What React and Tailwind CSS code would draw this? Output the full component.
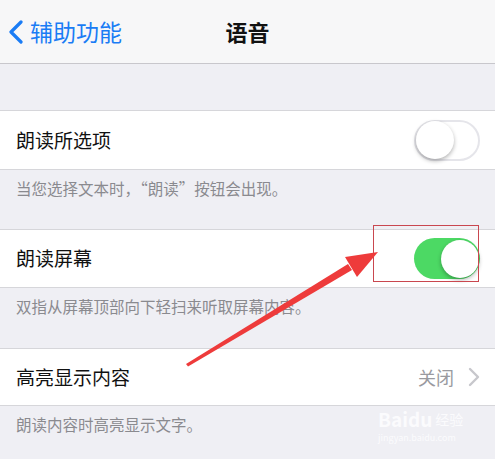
import React from 'react';

const font = { fontFamily: '"Noto Sans CJK SC", "Noto Sans", sans-serif' };

const Toggle = ({ on }) => (
  <div
    className={`relative w-[66px] h-[41px] rounded-full ${
      on ? 'bg-[#4cd964]' : 'bg-white border-2 border-[#e5e5ea]'
    }`}
  >
    <div
      className={`absolute w-[38px] h-[38px] rounded-full bg-white shadow-[0_2px_4px_rgba(0,0,0,0.3)] ${
        on ? 'right-[1px] top-[1.5px]' : 'left-0 top-[-0.5px]'
      }`}
    />
  </div>
);

const Row = ({ label, right, height }) => (
  <div
    className={`flex items-center justify-between bg-white border-y border-[#d6d6da] pl-[16px] pr-[15px] ${height}`}
  >
    <span className="text-[19px] text-[#111]">{label}</span>
    {right}
  </div>
);

const Footer = ({ text, height }) => (
  <div className={`px-[16px] pt-[7px] ${height}`}>
    <p className="text-[15.5px] text-[#8a8a8f]">{text}</p>
  </div>
);

export default function App() {
  return (
    <div className="relative w-[495px] h-[459px] overflow-hidden bg-[#efeff4]" style={font}>
      <div className="relative flex items-center h-[64px] bg-[#f7f7f8] border-b border-[#c8c7cc]">
        <div className="flex items-center pl-[7px] text-[#1a7cf5]">
          <svg width="18" height="24" viewBox="0 0 18 24">
            <path d="M14 2 L4 12 L14 22" fill="none" stroke="#1a7cf5" strokeWidth="3.2" strokeLinecap="round" strokeLinejoin="round" />
          </svg>
          <span className="ml-[5px] text-[23px]">辅助功能</span>
        </div>
        <span className="absolute left-1/2 -translate-x-1/2 text-[22px] font-bold text-[#111]">语音</span>
      </div>

      <div className="h-[46px]" />

      <Row label="朗读所选项" height="h-[60px]" right={<Toggle on={false} />} />
      <Footer text="当您选择文本时，“朗读”按钮会出现。" height="h-[59px]" />

      <Row label="朗读屏幕" height="h-[59px]" right={<Toggle on />} />
      <Footer text="双指从屏幕顶部向下轻扫来听取屏幕内容。" height="h-[60px]" />

      <Row
        label="高亮显示内容"
        height="h-[58px]"
        right={
          <div className="flex items-center gap-[14px]">
            <span className="text-[18px] text-[#9a9a9f]">关闭</span>
            <svg width="12" height="20" viewBox="0 0 12 20">
              <path d="M2 2 L10 10 L2 18" fill="none" stroke="#c7c7cc" strokeWidth="2.4" strokeLinecap="round" strokeLinejoin="round" />
            </svg>
          </div>
        }
      />
      <Footer text="朗读内容时高亮显示文字。" height="h-[53px]" />

      {/* highlight box */}
      <div className="absolute left-[373px] top-[225px] w-[106px] h-[57px] border border-[#c9474f]" />

      {/* arrow */}
      <svg className="absolute left-0 top-0 pointer-events-none" width="495" height="459">
        <polygon points="186,364 188,366.5 352,270 348,264" fill="#ee3b3b" />
        <polygon points="378,252 357,277 345,257" fill="#ee3b3b" />
      </svg>

      {/* watermark */}
      <div className="absolute left-[378px] top-[408px] flex flex-col text-[#fbfbfd]">
        <div className="flex items-center h-[22px]">
          <span className="text-[19px] leading-[22px] font-bold">Baidu</span>
          <span className="text-[14px] leading-[22px] ml-[3px]">经验</span>
        </div>
        <span className="text-[9px] leading-[12px] mt-[2px]">jingyan.baidu.com</span>
      </div>
    </div>
  );
}
